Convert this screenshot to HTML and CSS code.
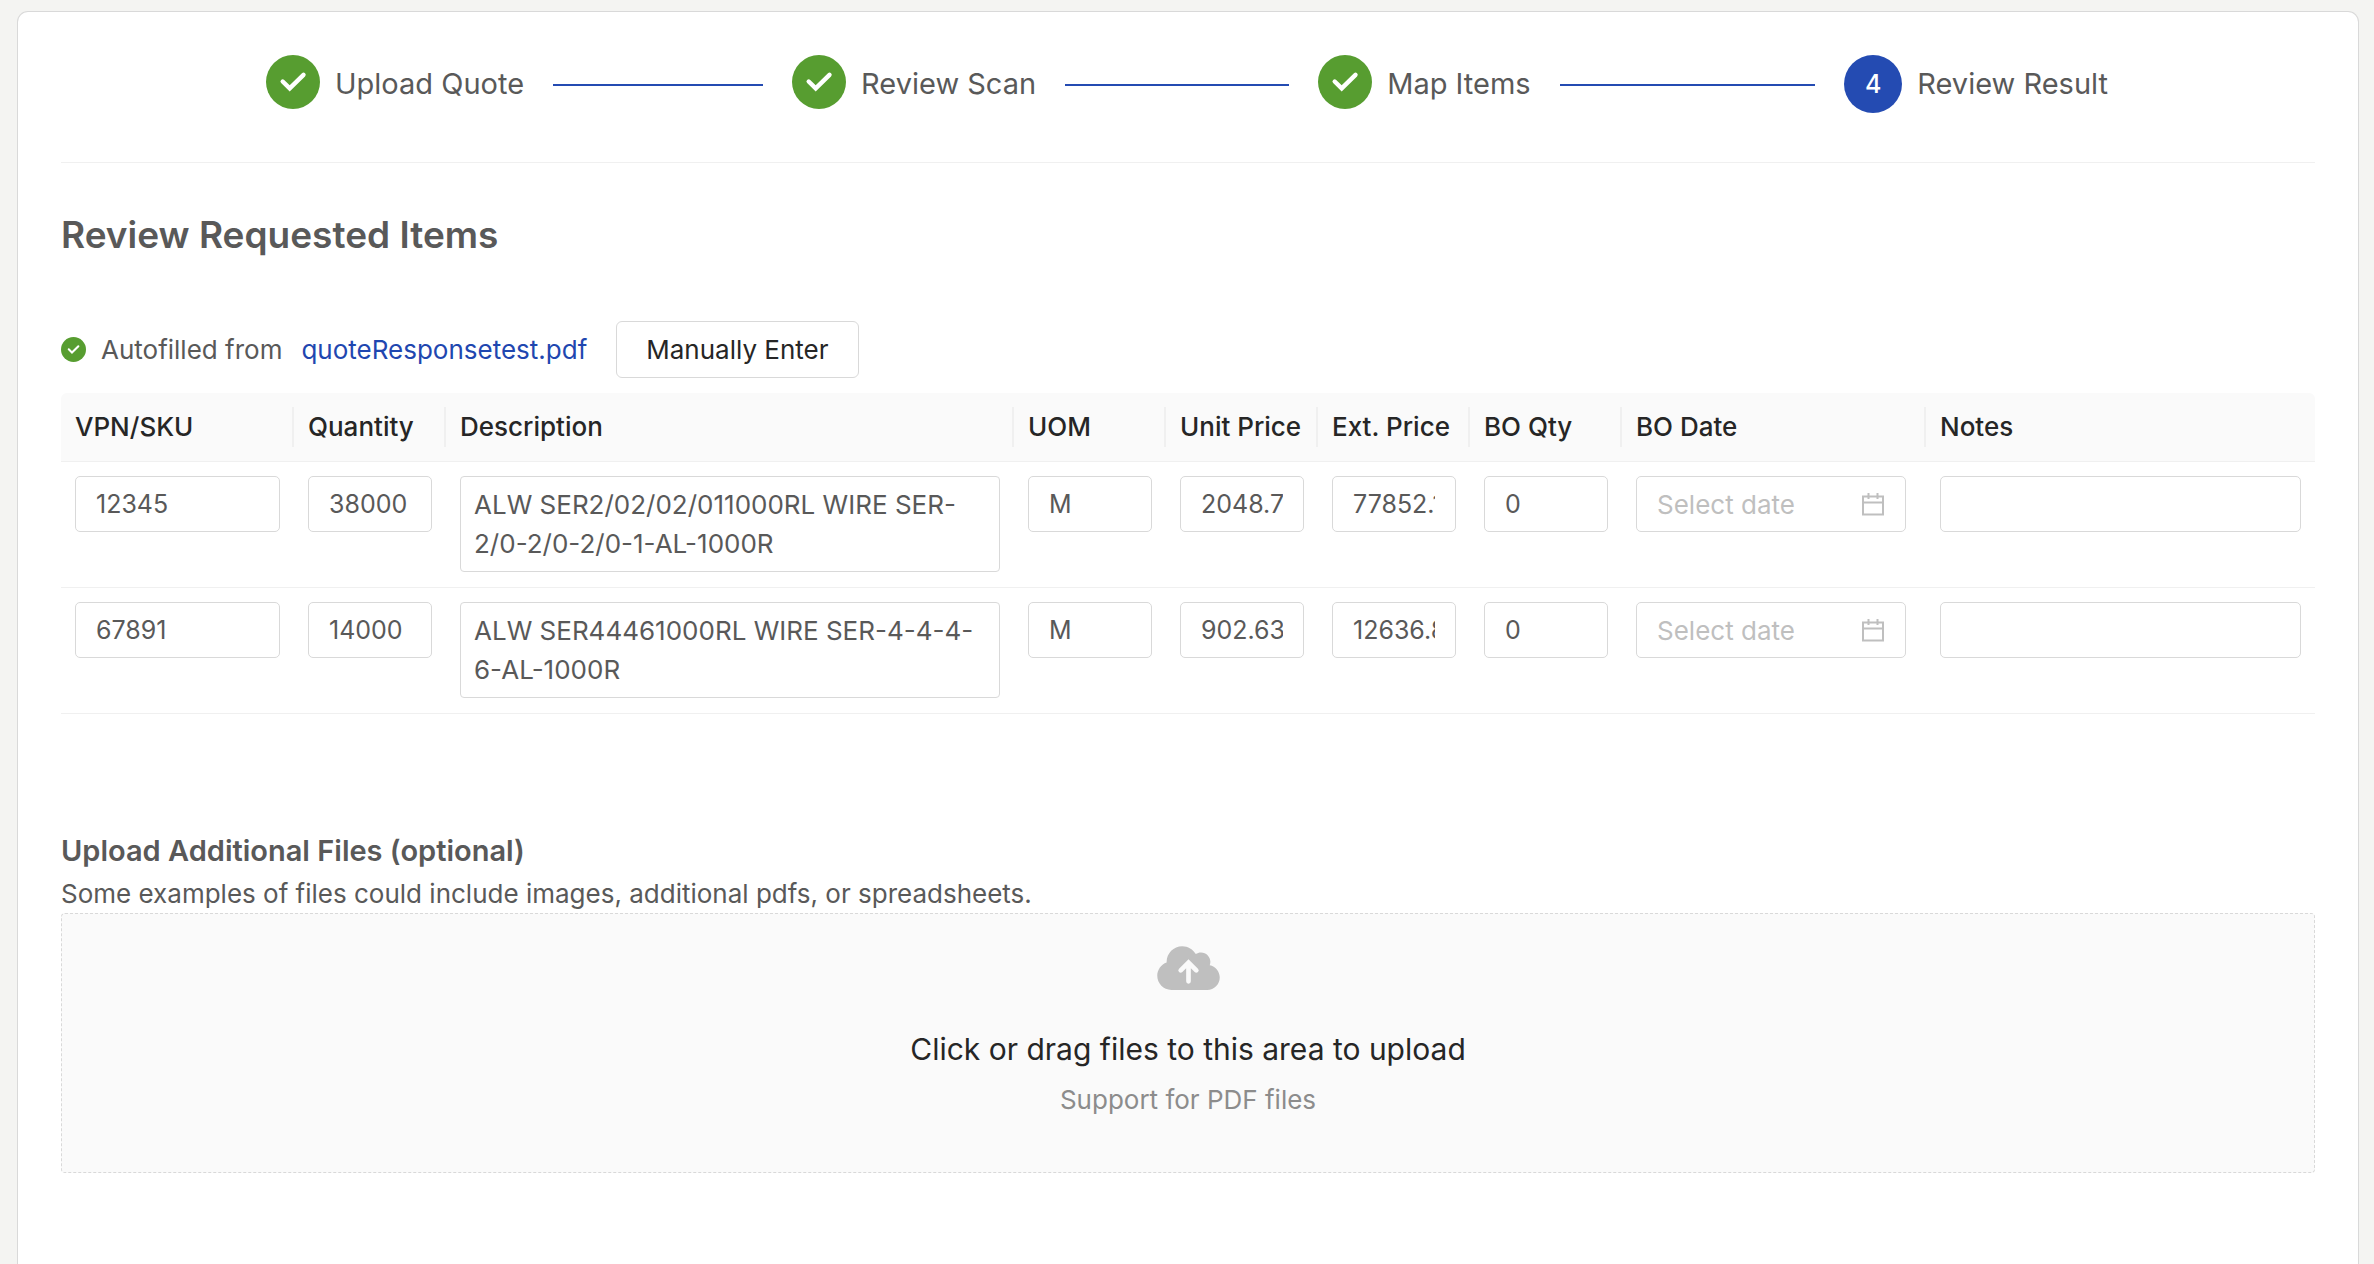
FILE: index.html
```
<!DOCTYPE html>
<html lang="en">
<head>
  <meta charset="UTF-8">
  <meta name="viewport" content="width=device-width, initial-scale=1.0">
  <title>Review Result</title>
  <link rel="stylesheet" href="styles.css">
</head>
<body>
  <!-- Shared icons -->
  <svg class="icon-defs" aria-hidden="true">
    <symbol id="icon-check" viewBox="0 0 54 54">
      <circle cx="27" cy="27" r="27" fill="#579d30"/>
      <path d="M16.7 26.5 L23.7 33.4 L37.5 19.9" fill="none" stroke="#fff" stroke-width="4.4" stroke-linecap="round"/>
    </symbol>
    <symbol id="icon-calendar" viewBox="0 0 24 24">
      <path d="M2 4.5h20v18H2zM2 10.5h20M7.5 1v6M16.5 1v6" fill="none" stroke="#bfbfbf" stroke-width="2"/>
    </symbol>
  </svg>

  <main class="card">
    <ol class="steps">
      <li class="step done">
        <svg class="step-icon"><use href="#icon-check"/></svg>
        <span class="step-title">Upload Quote</span>
      </li>
      <li class="step done">
        <svg class="step-icon"><use href="#icon-check"/></svg>
        <span class="step-title">Review Scan</span>
      </li>
      <li class="step done">
        <svg class="step-icon"><use href="#icon-check"/></svg>
        <span class="step-title">Map Items</span>
      </li>
      <li class="step active" aria-current="step">
        <span class="step-number">4</span>
        <span class="step-title">Review Result</span>
      </li>
    </ol>

    <h1>Review Requested Items</h1>

    <div class="autofill">
      <svg class="autofill-icon"><use href="#icon-check"/></svg>
      <span>Autofilled from</span>
      <a href="#">quoteResponsetest.pdf</a>
      <button type="button" class="manual-button">Manually Enter</button>
    </div>

    <table class="items">
      <colgroup>
        <col class="col-sku">
        <col class="col-small">
        <col class="col-description">
        <col class="col-small">
        <col class="col-small">
        <col class="col-small">
        <col class="col-small">
        <col class="col-date">
        <col class="col-notes">
      </colgroup>
      <thead>
        <tr>
          <th scope="col"><span>VPN/SKU</span></th>
          <th scope="col"><span>Quantity</span></th>
          <th scope="col"><span>Description</span></th>
          <th scope="col"><span>UOM</span></th>
          <th scope="col"><span>Unit Price</span></th>
          <th scope="col"><span>Ext. Price</span></th>
          <th scope="col"><span>BO Qty</span></th>
          <th scope="col"><span>BO Date</span></th>
          <th scope="col"><span>Notes</span></th>
        </tr>
      </thead>
      <tbody>
        <tr>
          <td><input type="text" class="field" aria-label="VPN/SKU" value="12345"></td>
          <td><input type="text" class="field" aria-label="Quantity" value="38000"></td>
          <td><textarea class="field" rows="2" aria-label="Description">ALW SER2/02/02/011000RL WIRE SER-2/0-2/0-2/0-1-AL-1000R</textarea></td>
          <td><input type="text" class="field" aria-label="UOM" value="M"></td>
          <td><input type="text" class="field" aria-label="Unit Price" value="2048.74"></td>
          <td><input type="text" class="field" aria-label="Ext. Price" value="77852.12"></td>
          <td><input type="text" class="field" aria-label="BO Qty" value="0"></td>
          <td>
            <div class="field date-picker">
              <input type="text" aria-label="BO Date" placeholder="Select date">
              <svg class="calendar"><use href="#icon-calendar"/></svg>
            </div>
          </td>
          <td><input type="text" class="field" aria-label="Notes"></td>
        </tr>
        <tr>
          <td><input type="text" class="field" aria-label="VPN/SKU" value="67891"></td>
          <td><input type="text" class="field" aria-label="Quantity" value="14000"></td>
          <td><textarea class="field" rows="2" aria-label="Description">ALW SER44461000RL WIRE SER-4-4-4-6-AL-1000R</textarea></td>
          <td><input type="text" class="field" aria-label="UOM" value="M"></td>
          <td><input type="text" class="field" aria-label="Unit Price" value="902.63"></td>
          <td><input type="text" class="field" aria-label="Ext. Price" value="12636.82"></td>
          <td><input type="text" class="field" aria-label="BO Qty" value="0"></td>
          <td>
            <div class="field date-picker">
              <input type="text" aria-label="BO Date" placeholder="Select date">
              <svg class="calendar"><use href="#icon-calendar"/></svg>
            </div>
          </td>
          <td><input type="text" class="field" aria-label="Notes"></td>
        </tr>
      </tbody>
    </table>

    <h2>Upload Additional Files (optional)</h2>
    <p class="upload-note">Some examples of files could include images, additional pdfs, or spreadsheets.</p>

    <label class="dropzone">
      <input type="file" class="file-input" accept="application/pdf" multiple>
      <svg class="cloud" viewBox="0 0 640 512" aria-hidden="true">
        <path fill="#bfbfbf" d="M537.6 226.6c4.1-10.7 6.4-22.4 6.4-34.6 0-53-43-96-96-96-19.7 0-38.1 6-53.3 16.2C367 64.2 315.3 32 256 32c-88.4 0-160 71.6-160 160 0 2.7.1 5.4.2 8.1C40.2 219.8 0 273.2 0 336c0 79.5 64.5 144 144 144h368c70.7 0 128-57.3 128-128 0-61.9-44-113.6-102.4-125.4z"/>
        <path fill="none" stroke="#fafafa" stroke-width="48" stroke-linecap="round" d="M320 210V392M240 280L320 200L400 280"/>
      </svg>
      <span class="dropzone-title">Click or drag files to this area to upload</span>
      <span class="dropzone-hint">Support for PDF files</span>
    </label>
  </main>
</body>
</html>
```
FILE: styles.css
```
* {
  box-sizing: border-box;
}

body {
  margin: 0;
  padding: 11px 15px 0 17px;
  background: #f4f4f2;
  color: #595959;
  font-family: Inter, "Liberation Sans", sans-serif;
  font-size: 26px;
  line-height: 39px;
}

.icon-defs {
  display: none;
}

.card {
  min-height: calc(100vh - 11px);
  padding: 43px;
  background: #fff;
  border: 1px solid #d9d9d9;
  border-bottom: none;
  border-radius: 11px 11px 0 0;
}

/* Steps */
.steps {
  display: flex;
  margin: 0 0 48px;
  padding: 0 207px 49px 205px;
  border-bottom: 1px solid #f0f0f0;
  list-style: none;
}

.step {
  display: flex;
  flex: 1;
  align-items: center;
  height: 58px;
  font-size: 29px;
  white-space: nowrap;
}

.step:last-child {
  flex: none;
}

/* Line to the next step */
.step:not(:last-child)::after {
  content: "";
  flex: 1;
  height: 2px;
  margin: 2px 29px 0;
  background: #244bb2;
}

.step-title {
  padding-bottom: 2px;
}

.step-icon {
  flex: none;
  align-self: flex-start;
  width: 54px;
  height: 54px;
  margin-right: 15px;
}

.step-number {
  width: 58px;
  margin-right: 15px;
  border-radius: 50%;
  background: #244bb2;
  color: #fff;
  font-size: 25px;
  font-weight: 500;
  line-height: 58px;
  text-align: center;
}

h1 {
  margin: 0 0 62px;
  font-size: 37px;
  font-weight: 600;
  line-height: 48px;
}

/* Autofill bar */
.autofill {
  display: flex;
  align-items: center;
  margin-bottom: 15px;
}

.autofill-icon {
  width: 25px;
  height: 25px;
  margin-right: 15px;
}

.autofill a {
  margin: 0 29px 0 19px;
  color: #1f47b0;
  text-decoration: none;
}

.manual-button {
  height: 57px;
  padding: 0 29px;
  background: #fff;
  border: 1px solid #d9d9d9;
  border-radius: 6px;
  color: #262626;
  font: inherit;
  cursor: pointer;
}

/* Items table */
.items {
  width: 100%;
  margin-bottom: 114px;
  border-collapse: separate;
  border-spacing: 0;
  table-layout: fixed;
}

.col-sku {
  width: 233px;
}

.col-small {
  width: 152px;
}

.col-description {
  width: 568px;
}

.col-date {
  width: 304px;
}

.items th {
  padding: 14px 0;
  background: #fafafa;
  border-bottom: 1px solid #f0f0f0;
  color: #262626;
  font-weight: 500;
  line-height: 40px;
  text-align: left;
  white-space: nowrap;
}

.items th span {
  display: block;
  padding-left: 14px;
  border-right: 2px solid #f0f0f0;
}

.items th:first-child {
  border-top-left-radius: 6px;
}

.items th:last-child {
  border-top-right-radius: 6px;
}

.items th:last-child span {
  border-right: none;
}

.items td {
  padding: 14px 14px 15px;
  border-bottom: 1px solid #f0f0f0;
  vertical-align: top;
}

.field {
  display: block;
  width: 100%;
  height: 56px;
  padding: 0 20px;
  background: #fff;
  border: 1px solid #d9d9d9;
  border-radius: 5px;
  color: #595959;
  font: inherit;
  font-size: 25px;
}

textarea.field {
  height: 96px;
  padding: 8px 13px;
  border-radius: 4px;
  font-size: 26px;
  line-height: 39px;
  resize: none;
  overflow: hidden;
}

.date-picker {
  display: flex;
  align-items: center;
  max-width: 270px;
  font-size: 26px;
}

.date-picker input {
  flex: 1;
  min-width: 0;
  padding: 0;
  background: none;
  border: none;
  color: inherit;
  font: inherit;
}

.date-picker input::placeholder {
  color: #bfbfbf;
}

.calendar {
  flex: none;
  width: 24px;
  height: 24px;
}

/* Upload */
h2 {
  margin: 0;
  font-size: 29px;
  font-weight: 600;
  line-height: 46px;
}

.upload-note {
  margin: 0;
}

.dropzone {
  display: flex;
  flex-direction: column;
  align-items: center;
  padding: 29px 29px 53px;
  background: #fafafa;
  border: 1px dashed #d9d9d9;
  border-radius: 4px;
  cursor: pointer;
}

.file-input {
  position: absolute;
  opacity: 0;
  pointer-events: none;
}

.cloud {
  width: 63px;
  height: 50px;
  margin-bottom: 32px;
}

.dropzone-title {
  margin-bottom: 7px;
  color: #262626;
  font-size: 30px;
  line-height: 48px;
}

.dropzone-hint {
  color: #8c8c8c;
}
```
